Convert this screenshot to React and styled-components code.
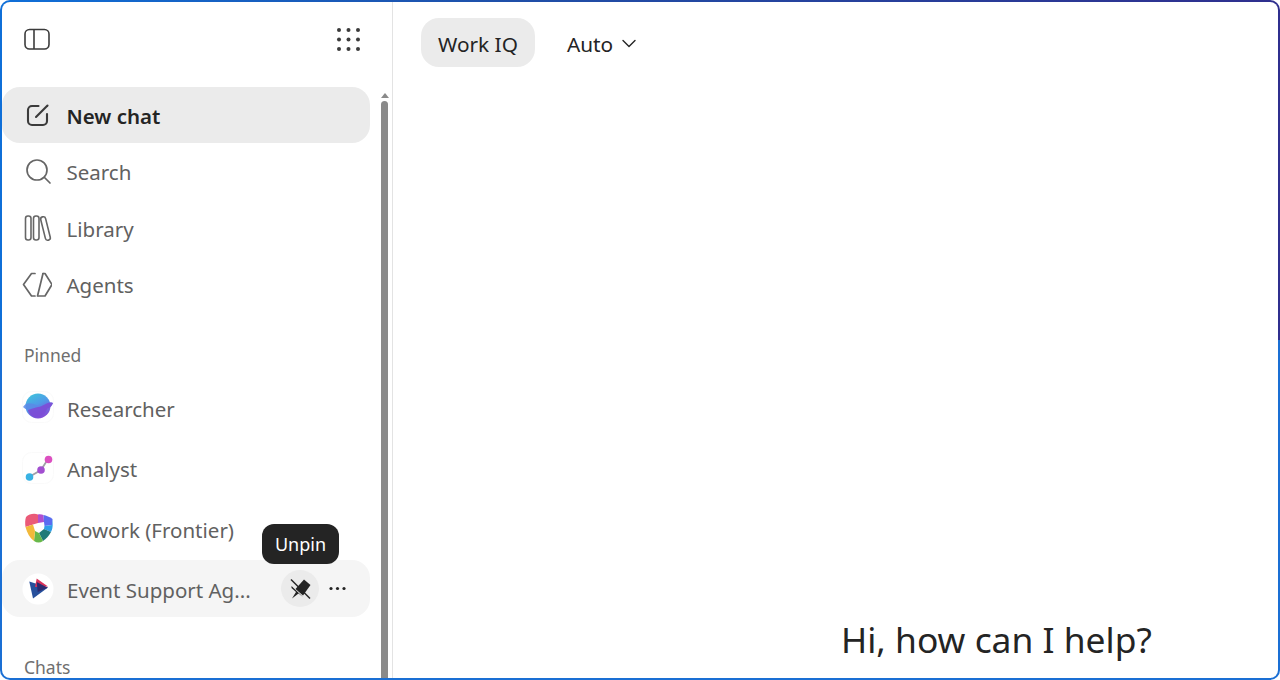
import React from "react";
import styled, { createGlobalStyle } from "styled-components";

const Global = createGlobalStyle`
  html, body { margin: 0; padding: 0; background: #fff; }
  #root { width: 1280px; height: 680px; }
  * { box-sizing: border-box; }
`;

const Frame = styled.div`
  width: 1280px;
  height: 680px;
  padding: 2px;
  border-radius: 10px;
  background: linear-gradient(to bottom, transparent 0 50%, #1a6fd4 50%), linear-gradient(to right, #0f6fd8 0%, #1f4fa8 40%, #2f2f8e 100%);
  font-family: "Noto Sans", "Open Sans", sans-serif;
`;

const Window = styled.div`
  width: 100%;
  height: 100%;
  display: flex;
  background: #fff;
  border-radius: 8px;
  overflow: hidden;
`;

const Sidebar = styled.aside`
  width: 391px;
  flex: none;
  display: flex;
  border-right: 1px solid #e3e3e3;
`;

const SideColumn = styled.div`
  width: 368px;
  flex: none;
  display: flex;
  flex-direction: column;
`;

const SideHeader = styled.div`
  height: 85px;
  flex: none;
  display: flex;
  align-items: flex-start;
  justify-content: space-between;
  padding: 22px 0 0 22px;
`;

const HeaderIcon = styled.svg`
  display: block;
  color: #3b3b3b;
`;

const GridIcon = styled.svg`
  display: block;
  margin: 3px 10px 0 0;
`;

const NavList = styled.nav`
  display: flex;
  flex-direction: column;
  gap: 0.5px;
`;

const NavRow = styled.div`
  height: 56px;
  display: flex;
  align-items: center;
  gap: 14.5px;
  padding-left: 20px;
  border-radius: 18px;
  background: ${(p) => (p.$active ? "#ebebeb" : "transparent")};
  color: ${(p) => (p.$active ? "#242424" : "#616161")};
  font-size: 20.5px;
  font-weight: ${(p) => (p.$active ? 600 : 400)};
`;

const NavLabel = styled.span`
  padding-top: 1px;
`;

const NavGlyph = styled.svg`
  width: 30px;
  height: 30px;
  flex: none;
  color: ${(p) => (p.$active ? "#3b3b3b" : "#666")};
`;

const SectionLabel = styled.div`
  height: 24px;
  line-height: 24px;
  padding-left: 22px;
  color: #6f6f6f;
  font-size: 17.5px;
  margin-top: ${(p) => p.$top}px;
  margin-bottom: ${(p) => p.$bottom || 0}px;
`;

const PinnedList = styled.div`
  display: flex;
  flex-direction: column;
  gap: 3.5px;
`;

const AgentRow = styled.div`
  position: relative;
  height: 57px;
  display: flex;
  align-items: center;
  gap: 13px;
  padding-left: 20px;
  border-radius: 18px;
  color: #616161;
  font-size: 20.5px;
  background: ${(p) => (p.$hover ? "#f5f5f5" : "transparent")};
`;

const AgentIcon = styled.svg`
  width: 32px;
  height: 32px;
  flex: none;
`;

const AgentName = styled.span`
  white-space: nowrap;
  padding-top: 3px;
`;

const RowActions = styled.div`
  margin-left: auto;
  display: flex;
  align-items: center;
  gap: 10px;
  padding-right: 24px;
`;

const PinButton = styled.div`
  width: 38px;
  height: 37px;
  border-radius: 50%;
  background: #ebebeb;
  display: flex;
  align-items: center;
  justify-content: center;
`;

const Tooltip = styled.div`
  position: absolute;
  left: 260px;
  top: -36px;
  width: 77px;
  height: 40px;
  border-radius: 12px;
  background: #242424;
  color: #fff;
  font-size: 18px;
  display: flex;
  align-items: center;
  justify-content: center;
  z-index: 2;
`;

const ScrollTrack = styled.div`
  flex: 1;
  display: flex;
  flex-direction: column;
  align-items: center;
  padding: 91px 0 0 7px;
  gap: 3px;
`;

const ScrollArrow = styled.div`
  width: 0;
  height: 0;
  border-left: 4px solid transparent;
  border-right: 4px solid transparent;
  border-bottom: 5px solid #8a8a8a;
`;

const ScrollThumb = styled.div`
  width: 7px;
  flex: 1;
  background: #8a8a8a;
  border-radius: 4px 4px 0 0;
`;

const Main = styled.main`
  flex: 1;
  display: flex;
  flex-direction: column;
`;

const TopBar = styled.div`
  display: flex;
  align-items: center;
  gap: 15px;
  padding: 16px 0 0 28px;
`;

const ModeChip = styled.div`
  height: 49px;
  padding: 2px 17px 0;
  border-radius: 18px;
  display: flex;
  align-items: center;
  gap: 9px;
  color: #242424;
  font-size: 20.8px;
  background: ${(p) => (p.$selected ? "#ebebeb" : "transparent")};
`;

const Greeting = styled.div`
  margin-top: auto;
  padding: 0 0 14px 448px;
  color: #242424;
  font-size: 35.4px;
  line-height: 50px;
  white-space: nowrap;
`;

export default function App() {
  return (
    <>
      <Global />
      <Frame>
        <Window>
          <Sidebar>
            <SideColumn>
              <SideHeader>
                <HeaderIcon width="26" height="30" viewBox="0 0 26 30" fill="none" stroke="currentColor" strokeWidth="1.6">
                  <rect x="1" y="5.5" width="24" height="19.5" rx="4.5" />
                  <path d="M10 5.5V25" />
                </HeaderIcon>
                <GridIcon width="24" height="24" viewBox="0 0 24 24" fill="#3b3b3b">
                  {[3, 12.5, 22].flatMap((y) =>
                    [3, 12.5, 22].map((x) => <circle key={`${x}-${y}`} cx={x} cy={y} r="2" />)
                  )}
                </GridIcon>
              </SideHeader>
              <NavList>
                <NavRow $active>
                  <NavGlyph $active viewBox="0 0 30 30" fill="none" stroke="currentColor" strokeWidth="2.1" strokeLinecap="round">
                    <path d="M16.5 6H10A4 4 0 0 0 6 10V21A4 4 0 0 0 10 25H21A4 4 0 0 0 25 21V14" />
                    <path d="M14 17L25.5 5.500" />
                  </NavGlyph>
                  <NavLabel>New chat</NavLabel>
                </NavRow>
                <NavRow>
                  <NavGlyph viewBox="0 0 30 30" fill="none" stroke="currentColor" strokeWidth="1.7" strokeLinecap="round">
                    <circle cx="15" cy="13" r="10" />
                    <path d="M22.500 20.500L28 26" />
                  </NavGlyph>
                  <NavLabel>Search</NavLabel>
                </NavRow>
                <NavRow>
                  <NavGlyph viewBox="0 0 30 30" fill="none" stroke="currentColor" strokeWidth="1.6">
                    <rect x="3.500" y="3" width="5.500" height="24" rx="2.400" />
                    <rect x="11.500" y="3" width="5.500" height="24" rx="2.400" />
                    <rect x="21" y="3.500" width="5" height="24" rx="2.400" transform="rotate(-14 23.500 15.500)" />
                  </NavGlyph>
                  <NavLabel>Library</NavLabel>
                </NavRow>
                <NavRow>
                  <NavGlyph viewBox="0 0 30 30" fill="none" stroke="currentColor" strokeWidth="1.7" strokeLinecap="round" strokeLinejoin="round">
                    <path d="M13 3.500H9.500L1.500 14.500L9.500 26H13" />
                    <path d="M21 3.500H23L30 14.500L23 26H16.500" />
                    <path d="M21 3.500L15.500 26" />
                  </NavGlyph>
                  <NavLabel>Agents</NavLabel>
                </NavRow>
              </NavList>
              <SectionLabel $top={30} $bottom={12}>Pinned</SectionLabel>
              <PinnedList>
                <AgentRow>
                  <AgentIcon viewBox="0 0 32 32">
                    <defs>
                      <linearGradient id="planet" x1="0.2" y1="0" x2="0.7" y2="1">
                        <stop offset="0" stopColor="#3fc3dc" />
                        <stop offset="0.45" stopColor="#4f9be8" />
                        <stop offset="1" stopColor="#8a45d6" />
                      </linearGradient>
                    </defs>
                    <rect x="0.500" y="0.500" width="31" height="31" rx="9" fill="#fff" stroke="#fafafa" />
                    <circle cx="16" cy="15" r="12.500" fill="url(#planet)" />
                    <path d="M1 16C5 10 10 13 15 14C21 15 25 9 31 12C30 16 26 17 21 19C14 21 6 21 1 16Z" fill="#5a8ae6" opacity="0.85" />
                    <path d="M16 16C21 16 25 10 31 12C29.500 16 27 17 25 18C23 24 18 27 14 26.500C9 26 6.500 22 6 19C9 18 12 17 16 16Z" fill="#7d4bd6" opacity="0.9" />
                  </AgentIcon>
                  <AgentName>Researcher</AgentName>
                </AgentRow>
                <AgentRow>
                  <AgentIcon viewBox="0 0 32 32">
                    <rect x="0.500" y="0.500" width="31" height="31" rx="9" fill="#fff" stroke="#fafafa" />
                    <path d="M7 25L19 18L26 7" stroke="#a0a0a8" strokeWidth="1.800" fill="none" />
                    <circle cx="7.500" cy="25" r="3.800" fill="#39b2e3" />
                    <circle cx="19" cy="18" r="3.800" fill="#a24fd0" />
                    <circle cx="26.500" cy="7.500" r="3.800" fill="#dc4fc0" />
                  </AgentIcon>
                  <AgentName>Analyst</AgentName>
                </AgentRow>
                <AgentRow>
                  <AgentIcon viewBox="0 0 32 32">
                    <path d="M4 5C7 2 12 1 16 2.500L16 11L11 12.500L3.500 15C3 11 3 8 4 5Z" fill="#ea5a78" />
                    <path d="M16 2.500C18 2 20 2.500 21.500 3L22 10L16 11Z" fill="#b04fd0" />
                    <path d="M21.500 3C24 3.500 28 5 30.500 7L30 13L22.500 14L22 10Z" fill="#5a6cf0" />
                    <path d="M30.500 7C31 14 30.500 17 29 20L22 17L22.500 14L30 13Z" fill="#2f9fe8" />
                    <path d="M29 20C27 24 24 27 21 29L17 21L22 17Z" fill="#1f7a78" />
                    <path d="M21 29C18 31 15 31 12 29L13 19L17 21Z" fill="#68b84a" />
                    <path d="M12 29C8 26 5 21 3.500 15L11 12.500L13 19Z" fill="#f2b93b" />
                  </AgentIcon>
                  <AgentName>Cowork (Frontier)</AgentName>
                </AgentRow>
                <AgentRow $hover>
                  <Tooltip>Unpin</Tooltip>
                  <AgentIcon viewBox="0 0 32 32">
                    <circle cx="16" cy="16" r="15.500" fill="#fff" />
                    <path d="M7.300 8.500L26 14.500L11 25.500Z" fill="#27509c" />
                    <path d="M14.700 5.500L26 13.500L13 14Z" fill="#d8315b" />
                    <path d="M14.700 9L25.700 14.700L15.700 19Z" fill="#2d2a70" />
                  </AgentIcon>
                  <AgentName>Event Support Ag...</AgentName>
                  <RowActions>
                    <PinButton>
                      <svg width="22" height="22" viewBox="0 0 22 22" fill="#242424">
                        <path d="M15 1.500L21.500 7L14 17.500L6.500 11Z" />
                        <path d="M2.500 8L14 19L9.500 15.500L3 20.500L7 14L2.500 10Z" />
                        <path d="M2 1.500L21 20.500" stroke="#242424" strokeWidth="1.500" />
                      </svg>
                    </PinButton>
                    <svg width="17" height="5" viewBox="0 0 17 5" fill="#242424">
                      <circle cx="2" cy="2.500" r="1.600" />
                      <circle cx="8.500" cy="2.500" r="1.600" />
                      <circle cx="15" cy="2.500" r="1.600" />
                    </svg>
                  </RowActions>
                </AgentRow>
              </PinnedList>
              <SectionLabel $top={38}>Chats</SectionLabel>
            </SideColumn>
            <ScrollTrack>
              <ScrollArrow />
              <ScrollThumb />
            </ScrollTrack>
          </Sidebar>
          <Main>
            <TopBar>
              <ModeChip $selected>Work IQ</ModeChip>
              <ModeChip>
                Auto
                <svg width="14" height="9" viewBox="0 0 14 9" fill="none" stroke="#242424" strokeWidth="1.400" strokeLinecap="round" strokeLinejoin="round">
                  <path d="M1 1.500L7 7.500L13 1.500" />
                </svg>
              </ModeChip>
            </TopBar>
            <Greeting>Hi, how can I help?</Greeting>
          </Main>
        </Window>
      </Frame>
    </>
  );
}
